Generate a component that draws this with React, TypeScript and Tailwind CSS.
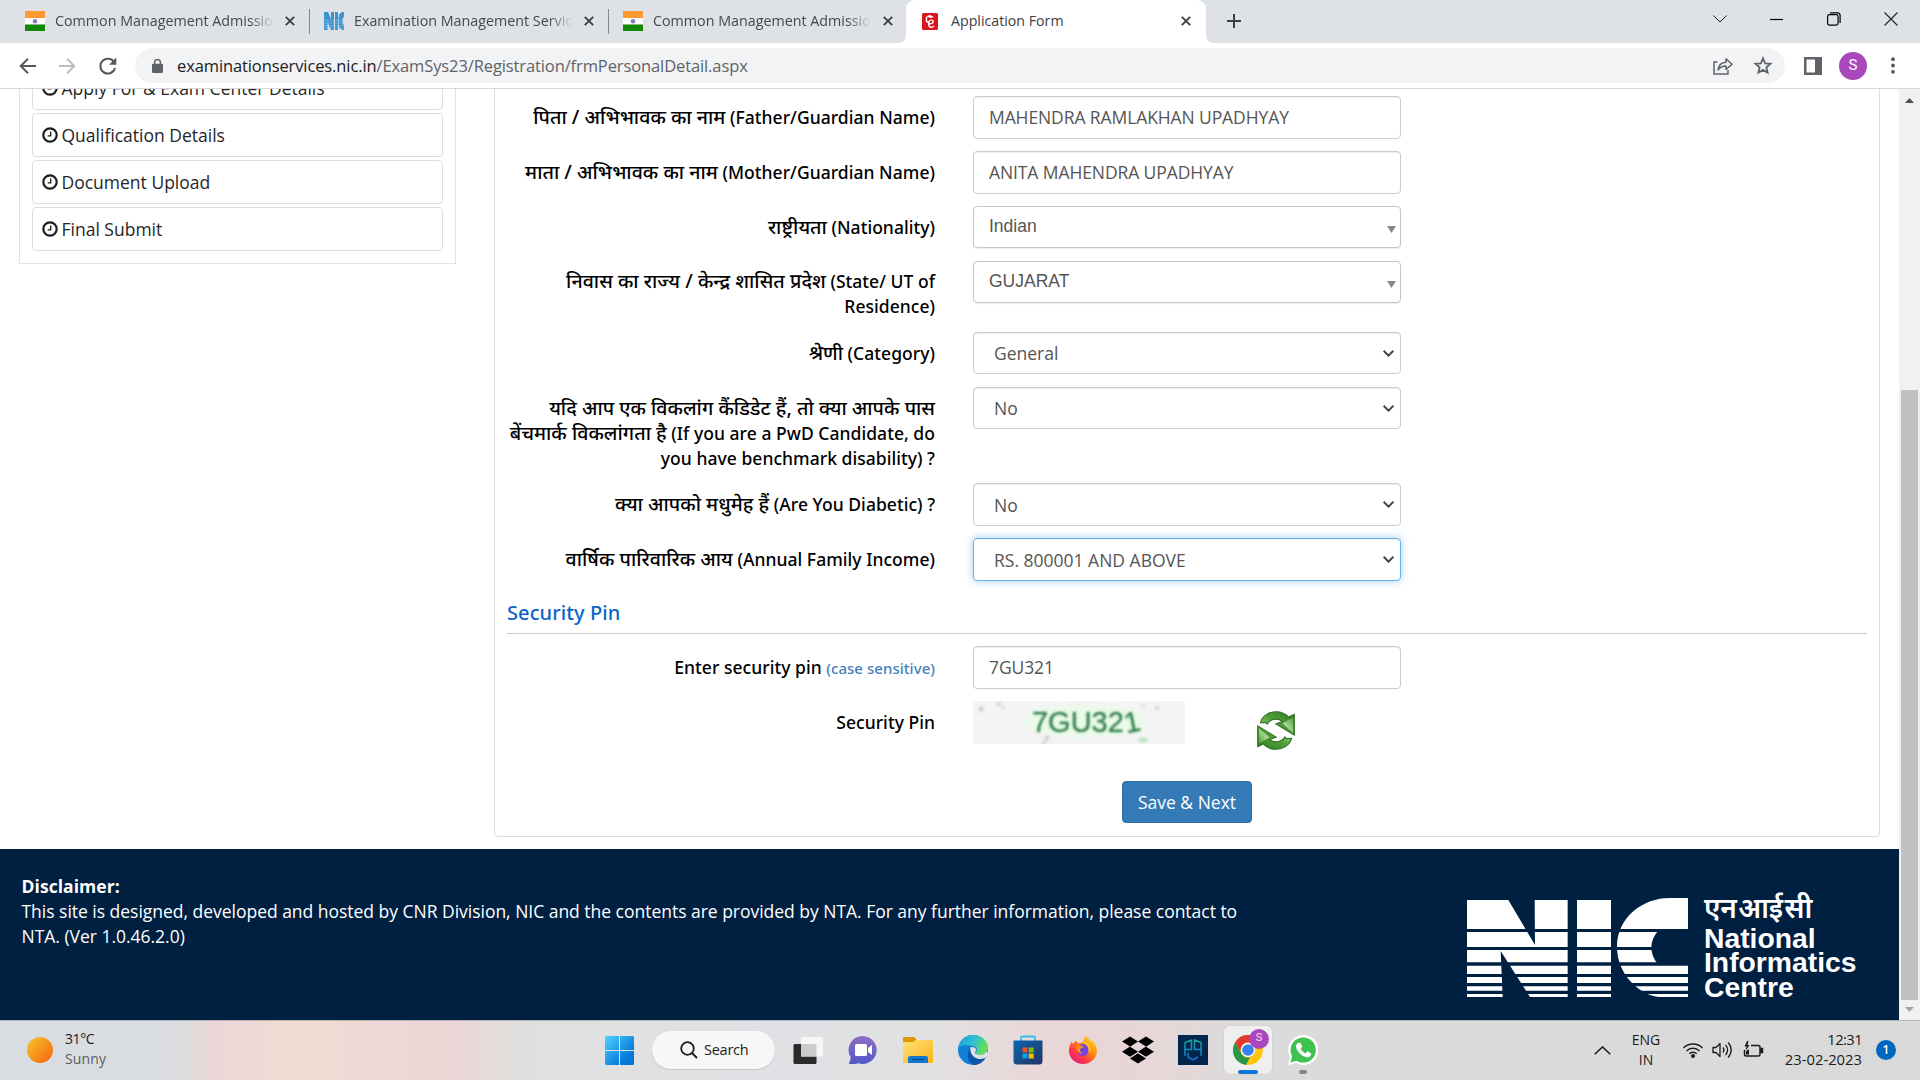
import type { ReactNode } from "react";
import { FaDropbox } from "react-icons/fa6";

const flagIcon = (
  <svg width="20" height="20" viewBox="0 0 20 20" className="shrink-0">
    <rect width="20" height="7" fill="#ff9933" />
    <rect y="7" width="20" height="6.5" fill="#fff" />
    <rect y="13.5" width="20" height="6.5" fill="#128807" />
    <circle cx="10" cy="10.2" r="2.2" fill="#7d7cc4" />
  </svg>
);

const nicIcon = (
  <svg width="20" height="20" viewBox="0 0 20 20" className="shrink-0" fill="#3b94cf">
    <path d="M0 1h4l3 7V1h3v18H7L3.500 11v8H0zM11 1h3v18h-3zM20 1c-4 0-5.500 2-5.500 9s1.500 9 5.500 9v-5c-2 0-2-8 0-8z" />
    <path d="M0 9.300h20M0 12h20M0 14.600h20M0 17h20" stroke="#a9cfe9" strokeWidth=".5" />
  </svg>
);

function Close() {
  return (
    <svg width="10" height="10" viewBox="0 0 10 10" stroke="#3c4043" strokeWidth="1.9" className="shrink-0">
      <path d="M.8.8l8.400 8.400M9.200.8L.8 9.200" />
    </svg>
  );
}

function Tab({ icon, title, className, divider = true }: { icon: ReactNode; title: string; className: string; divider?: boolean }) {
  return (
    <div className={"flex h-[42px] items-center " + className}>
      {icon}
      <span className="ml-[10px] w-[221px] overflow-hidden whitespace-nowrap text-[14.3px] text-[#45494d] [mask-image:linear-gradient(to_right,black_88%,transparent_99%)]">
        {title}
      </span>
      <span className="ml-[9px] flex">
        <Close />
      </span>
      {divider && <span className="ml-auto h-[25px] w-px bg-[#85888c]" />}
    </div>
  );
}

function BrowserChrome() {
  return (
    <header className="shrink-0">
      <div className="flex h-[43px] bg-[#dee1e6]">
        <Tab icon={flagIcon} title="Common Management Admission" className="w-[310px] pl-[25px]" />
        <Tab icon={nicIcon} title="Examination Management Services" className="w-[299px] pl-[14px]" />
        <Tab icon={flagIcon} title="Common Management Admission" className="w-[297px] pl-[14px]" divider={false} />
        <div className="relative flex h-[43px] w-[300px] items-center rounded-t-[9px] bg-white pb-px pl-4">
          <svg width="8" height="8" viewBox="0 0 8 8" className="absolute bottom-0 -left-2" fill="#fff">
            <path d="M8 0v8H0c5 0 8-3 8-8z" />
          </svg>
          <svg width="8" height="8" viewBox="0 0 8 8" className="absolute -right-2 bottom-0" fill="#fff">
            <path d="M0 0v8h8C3 8 0 5 0 0z" />
          </svg>
          <svg width="16" height="17" viewBox="0 0 16 17">
            <rect width="16" height="17" rx="1.5" fill="#d8141c" />
            <path d="M4 3.200l4-1.200 4 2-3.500 1z" fill="#fff" />
            <path d="M4.500 4v4.500l2 .8M6.300 10.500c3 .6 5-.3 5-2 0-1.800-3.600-2-4.300.3-.8 2.500-.3 5.700 2.200 5.500 1.300 0 2.200-.6 2.800-1.500" fill="none" stroke="#fff" strokeWidth="1.400" />
          </svg>
          <span className="ml-[13px] text-[14.2px] text-[#3c4043]">Application Form</span>
          <span className="mr-[15px] ml-auto flex">
            <Close />
          </span>
        </div>
        <svg width="14" height="14" viewBox="0 0 14 14" className="mt-[14px] ml-[21px]" stroke="#3c4043" strokeWidth="2">
          <path d="M7 0v14M0 7h14" />
        </svg>
        <div className="mr-[22px] ml-auto flex items-center gap-[43px] pb-[6px]">
          <svg width="14" height="8" viewBox="0 0 14 8" fill="none" stroke="#222">
            <path d="M.5.5L7 7 13.500.5" />
          </svg>
          <svg width="14" height="14" viewBox="0 0 14 14" stroke="#000" strokeWidth="1.200">
            <path d="M0 7.500h13" />
          </svg>
          <svg width="14" height="14" viewBox="0 0 14 14" fill="none" stroke="#000" strokeWidth="1.200">
            <rect x=".6" y="2.600" width="10.500" height="10.500" rx="1.800" />
            <path d="M3 .8h7.500a2.600 2.600 0 0 1 2.600 2.600V11" />
          </svg>
          <svg width="14" height="14" viewBox="0 0 14 14" stroke="#222" strokeWidth="1.100">
            <path d="M.5.5l13 13M13.500.5l-13 13" />
          </svg>
        </div>
      </div>
      <div className="flex h-[46px] items-center border-b border-[#d6d8da] bg-white pl-[19px]">
        <svg width="17" height="16" viewBox="0 0 17 16" fill="none" stroke="#55595e" strokeWidth="2">
          <path d="M17 8H2M9 .8L1.700 8 9 15.200" />
        </svg>
        <svg width="17" height="16" viewBox="0 0 17 16" className="ml-[23px]" fill="none" stroke="#bdbfc2" strokeWidth="2">
          <path d="M0 8h15M8 .8L15.300 8 8 15.200" />
        </svg>
        <svg width="18" height="18" viewBox="0 0 18 18" className="ml-[23px]">
          <path d="M15.300 5.500A7.400 7.400 0 1 0 16 11" fill="none" stroke="#55595e" strokeWidth="2.100" />
          <path d="M17.300.6v7.200h-7.200z" fill="#55595e" />
        </svg>
        <div className="ml-[18px] flex h-[35px] w-[1650px] items-center rounded-full bg-[#f1f3f4] pl-[17px]">
          <svg width="11" height="14" viewBox="0 0 11 14">
            <rect y="4.800" width="11" height="9.200" rx="1.200" fill="#5f6368" />
            <path d="M2.600 5V3.400a2.900 2.900 0 0 1 5.800 0V5" fill="none" stroke="#5f6368" strokeWidth="1.500" />
          </svg>
          <span className="ml-[14px] pt-px text-[16.5px] tracking-[-0.11px] text-[#5f6368]">
            <span className="text-[#202124]">examinationservices.nic.in</span>/ExamSys23/Registration/frmPersonalDetail.aspx
          </span>
          <svg width="20" height="18" viewBox="0 0 20 18" className="ml-auto" fill="none" stroke="#5f6368" strokeWidth="1.500">
            <path d="M4.500 5H1v12h14v-4" />
            <path d="M5 13c.5-5 3.500-7.500 8-7.700V1.800L19 7.200l-6 5.300V9.100C9.500 9 7 10.300 5 13z" strokeLinejoin="round" />
          </svg>
          <svg width="20" height="19" viewBox="0 0 20 19" className="mr-[12px] ml-[20px]" fill="none" stroke="#5f6368" strokeWidth="1.800">
            <path d="M10 2.300l2.100 5 5.400.5-4.100 3.600 1.200 5.300L10 13.900l-4.600 2.800 1.200-5.300L2.500 7.800l5.400-.5z" />
          </svg>
        </div>
        <svg width="18" height="18" viewBox="0 0 18 18" className="ml-[19px]">
          <rect width="18" height="18" fill="#5f6368" />
          <rect x="2.500" y="2.500" width="8.500" height="13" fill="#fff" />
        </svg>
        <span className="ml-[17px] flex size-7 items-center justify-center rounded-full bg-[#ab47bc] font-['Roboto'] text-[15px] text-white">S</span>
        <svg width="4" height="17" viewBox="0 0 4 17" className="ml-[24px]" fill="#55595e">
          <circle cx="2" cy="2.200" r="1.900" />
          <circle cx="2" cy="8.500" r="1.900" />
          <circle cx="2" cy="14.800" r="1.900" />
        </svg>
      </div>
    </header>
  );
}

const steps = ["Apply For & Exam Center Details", "Qualification Details", "Document Upload", "Final Submit"];

function Sidebar() {
  return (
    <aside className="ml-[19px] h-[175px] w-[437px] shrink-0 overflow-hidden border border-t-0 border-[#e3e3e3]">
      <ul className="-mt-[23px] ml-3 w-[411px] space-y-[3px]">
        {steps.map((s) => (
          <li key={s} className="flex h-11 items-center rounded-[4px] border border-[#dedede] pl-[9px] text-[17.5px] text-[#262626]">
            <svg width="16" height="16" viewBox="0 0 16 16" fill="none" stroke="#1d1d1d">
              <circle cx="8" cy="8" r="6.700" strokeWidth="2.200" />
              <path d="M8.700 4.500v4.300H5.700" strokeWidth="1.300" />
            </svg>
            <span className="ml-[3.5px]">{s}</span>
          </li>
        ))}
      </ul>
    </aside>
  );
}

function Hi({ children }: { children: ReactNode }) {
  return <span className="text-[19.6px] leading-none">{children}</span>;
}

function Row({ label, height, children }: { label: ReactNode; height: string; children: ReactNode }) {
  return (
    <div className={"flex items-start " + height}>
      <div className="-ml-1 w-[432px] shrink-0 pt-[9px] text-right font-['Noto_Sans'] text-[17.5px] leading-[25px] font-medium tracking-[0.04px] text-black">{label}</div>
      <div className="ml-[38px] w-[428px]">{children}</div>
    </div>
  );
}

function TextField({ value }: { value: string }) {
  return (
    <div className="flex h-[43px] items-center rounded-[4px] border border-[#ccc] pl-[15px] text-[17.5px] tracking-[-0.1px] text-[#555] shadow-[inset_0_1px_1px_rgba(0,0,0,0.075)]">
      {value}
    </div>
  );
}

function Combo({ value }: { value: string }) {
  return (
    <div className="flex h-[42px] items-center justify-between rounded-[4px] border border-[#c6c6c6] pr-1 pl-[15px] font-['Liberation_Sans'] text-[17.5px] text-[#555] shadow-[0_1px_1px_rgba(0,0,0,0.08)]">
      <span className="pb-px">{value}</span>
      <svg width="9" height="7" viewBox="0 0 9 7" className="mt-1" fill="#888">
        <path d="M0 0h9L4.500 7z" />
      </svg>
    </div>
  );
}

function Select({ value, tall = false, focused = false }: { value: string; tall?: boolean; focused?: boolean }) {
  return (
    <div
      className={
        "flex items-center justify-between rounded-[4px] border pr-[6px] pl-[20px] text-[17.5px] text-[#555] " +
        (tall ? "h-[43px] " : "h-[42px] ") +
        (focused
          ? "border-[#66afe9] shadow-[inset_0_1px_1px_rgba(0,0,0,0.075),0_0_8px_rgba(102,175,233,0.6)]"
          : "border-[#ccc] shadow-[inset_0_1px_1px_rgba(0,0,0,0.075)]")
      }
    >
      <span className={tall ? "pt-[2px]" : ""}>{value}</span>
      <svg width="11" height="7" viewBox="0 0 11 7" fill="none" stroke="#444" strokeWidth="2">
        <path d="M.6.8l4.900 4.800L10.400.8" />
      </svg>
    </div>
  );
}

const upperArrow = "M9 34C14 13 35 1 56 1c15 0 28 6 37 16l17-8v62L55 37l19-7C61 19 39 22 29 38l-4-5z";

function RefreshIcon() {
  return (
    <svg width="38" height="39" viewBox="-1 -1 113 116">
      <defs>
        <linearGradient id="leaf" x1="0" x2="1" y1="1" y2="0">
          <stop offset="0" stopColor="#c4e3a8" />
          <stop offset=".5" stopColor="#4f9f38" />
          <stop offset="1" stopColor="#2f7a22" />
        </linearGradient>
        <linearGradient id="leafLight" x1="0" x2="1" y1="1" y2="0">
          <stop offset=".2" stopColor="#cfe9ba" />
          <stop offset="1" stopColor="#4f9f38" />
        </linearGradient>
      </defs>
      <path d={upperArrow} fill="url(#leaf)" stroke="#2d6e20" strokeWidth="3" />
      <path d="M75 36l31-18v45z" fill="url(#leafLight)" />
      <g transform="rotate(180 55.500 57)">
        <path d={upperArrow} fill="url(#leaf)" stroke="#2d6e20" strokeWidth="3" />
        <path d="M75 36l31-18v45z" fill="url(#leafLight)" />
      </g>
    </svg>
  );
}

function Captcha() {
  return (
    <div className="relative flex h-[43px] w-[212px] justify-center overflow-hidden bg-[#f4f4f4] pl-[14px]">
      <svg width="212" height="43" className="absolute inset-0">
        <g className="blur-[1.5px]" fill="#ccc">
          <ellipse cx="112" cy="20" rx="62" ry="17" fill="#ecf9ec" />
          <circle cx="8" cy="8" r="2.500" fill="#c8c8c8" />
          <circle cx="26" cy="3" r="2" />
          <circle cx="30" cy="7" r="1.500" />
          <circle cx="74" cy="37" r="2.500" />
          <circle cx="71" cy="42" r="2" />
          <circle cx="184" cy="7" r="2" />
          <circle cx="170" cy="5" r="1.500" />
          <ellipse cx="170" cy="39" rx="5" ry="2" fill="#b7dcb9" />
        </g>
      </svg>
      <span className="relative flex font-['Liberation_Sans'] text-[29px] leading-[42px] text-[#2f7548] blur-[0.8px] [text-shadow:0_0_3px_#a5eda9]">
        7GU32<span className="inline-block -rotate-12">1</span>
      </span>
    </div>
  );
}

function FormPanel() {
  return (
    <section className="ml-[38px] h-[748px] w-[1386px] shrink-0 rounded-b-[4px] border border-t-0 border-[#ddd] pt-[7px] pr-3 pl-3">
      <Row height="h-[55px]" label={<><Hi>पिता / अभिभावक का नाम</Hi> (Father/Guardian Name)</>}>
        <TextField value="MAHENDRA RAMLAKHAN UPADHYAY" />
      </Row>
      <Row height="h-[55px]" label={<><Hi>माता / अभिभावक का नाम</Hi> (Mother/Guardian Name)</>}>
        <TextField value="ANITA MAHENDRA UPADHYAY" />
      </Row>
      <Row height="h-[55px]" label={<><Hi>राष्ट्रीयता</Hi> (Nationality)</>}>
        <Combo value="Indian" />
      </Row>
      <Row height="h-[71px]" label={<div className="-mt-px"><Hi>निवास का राज्य / केन्द्र शासित प्रदेश</Hi> (State/ UT of<br />Residence)</div>}>
        <Combo value="GUJARAT" />
      </Row>
      <Row height="h-[55px]" label={<><Hi>श्रेणी</Hi> (Category)</>}>
        <Select value="General" />
      </Row>
      <Row
        height="h-[96px]"
        label={<><Hi>यदि आप एक विकलांग कैंडिडेट हैं, तो क्या आपके पास</Hi><br /><Hi>बेंचमार्क विकलांगता है</Hi> (If you are a PwD Candidate, do<br />you have benchmark disability) ?</>}
      >
        <Select value="No" />
      </Row>
      <Row height="h-[55px]" label={<><Hi>क्या आपको मधुमेह हैं</Hi> (Are You Diabetic) ?</>}>
        <Select value="No" tall />
      </Row>
      <Row height="h-[55px]" label={<><Hi>वार्षिक पारिवारिक आय</Hi> (Annual Family Income)</>}>
        <Select value="RS. 800001 AND ABOVE" tall focused />
      </Row>
      <h2 className="mb-3 h-[41px] border-b border-[#ccc] pt-[5px] font-['Noto_Sans'] text-[20px] leading-[29px] font-medium tracking-[0.1px] text-[#0c64c8]">Security Pin</h2>
      <Row height="h-[55px]" label={<>Enter security pin <span className="text-[15px] leading-none text-[#4580bd]">(case sensitive)</span></>}>
        <TextField value="7GU321" />
      </Row>
      <Row height="h-[80px]" label="Security Pin">
        <div className="flex items-start">
          <Captcha />
          <span className="mt-[10px] ml-[72px]">
            <RefreshIcon />
          </span>
        </div>
      </Row>
      <button className="ml-[615px] flex h-[42px] w-[130px] items-center justify-center rounded-[4px] border border-[#2e6da4] bg-[#337ab7] text-[17.5px] text-white">
        Save &amp; Next
      </button>
    </section>
  );
}

const bands: [number, number][] = [[0, 93], [102, 45], [156, 37], [203, 25], [237, 18], [265, 13], [288, 9]];

function NicLogo() {
  return (
    <svg width="221" height="99" viewBox="0 0 663 297" fill="#fff">
      <clipPath id="bands">
        {bands.map(([y, h]) => (
          <rect key={y} y={y} width="663" height={h} />
        ))}
      </clipPath>
      <g clipPath="url(#bands)">
        <path d="M0 6h124l80 135-1-135h99v291H189L101 159l6 138H0z" />
        <path d="M330 6h102v291H330z" />
        <path d="M663 0h-56C530 0 451 55 450 146c1 85 65 141 124 151h89v-97h-89c-28-31-28-73 1-103h88z" />
      </g>
    </svg>
  );
}

function Footer() {
  return (
    <footer className="flex h-[171px] shrink-0 bg-[#002042] text-white">
      <div className="w-[1467px] pt-[25px] pl-[21.5px] text-[17.5px] leading-[25.2px] tracking-[-0.02px]">
        <b className="tracking-[0.05px]">Disclaimer:</b>
        <p>
          This site is designed, developed and hosted by CNR Division, NIC and the contents are provided by NTA. For any further information, please contact to
          <br />
          NTA. (Ver 1.0.46.2.0)
        </p>
      </div>
      <div className="pt-[49px]">
        <NicLogo />
      </div>
      <div className="pt-[39px] pl-4 font-['Liberation_Sans'] text-[28.3px] leading-[24.4px] font-bold">
        <p className="h-[38px] pt-1 font-['Noto_Sans'] text-[28px] leading-[30px] font-semibold tracking-[-0.2px] whitespace-nowrap [word-spacing:-5.5px]">एन आई सी</p>
        <p>National</p>
        <p>Informatics</p>
        <p>Centre</p>
      </div>
    </footer>
  );
}

function Scrollbar() {
  return (
    <div className="flex w-[21px] shrink-0 flex-col items-center bg-[#f1f1f1]">
      <svg width="9" height="5" viewBox="0 0 9 5" className="mt-[9px]" fill="#505050">
        <path d="M0 5l4.500-5L9 5z" />
      </svg>
      <div className="mt-[287px] h-[610px] w-[17px] bg-[#c1c1c1]" />
      <svg width="9" height="5" viewBox="0 0 9 5" className="mt-[7px]" fill="#a3a3a3">
        <path d="M0 0l4.500 5L9 0z" />
      </svg>
    </div>
  );
}

function AppSlot({ children }: { children: ReactNode }) {
  return <div className="relative flex h-[59px] w-[55px] shrink-0 items-center justify-center">{children}</div>;
}

function Taskbar() {
  return (
    <div className="flex h-[60px] shrink-0 items-center border-t border-[#b5b5b9] bg-[linear-gradient(90deg,#d9dce1_0px,#dadcdf_180px,#ebd7d6_215px,#f2dcd5_300px,#ecd5d5_450px,#e0e0e0_530px,#dfe1e4_780px,#e2e1e2_940px,#ead7d7_1040px,#e8d6d7_1130px,#dbdbdb_1260px,#dcdbdc_1450px,#d9d9d9_1920px)] pb-px">
      <div className="flex w-[592px] items-center pl-[27px] text-[14px] leading-[20px]">
        <span className="size-[26px] rounded-full bg-linear-to-br from-[#f5c52c] to-[#f2600a]" />
        <div className="mb-[2px] ml-3">
          <p className="tracking-[-0.4px] text-[#1b1b1b]">31°C</p>
          <p className="tracking-[0.15px] text-[#5c5c5c]">Sunny</p>
        </div>
      </div>
      <svg width="29" height="29" viewBox="0 0 29 29" className="ml-[13px]">
        <defs>
          <linearGradient id="win" x2="1" y2="1">
            <stop stopColor="#4fd4ff" />
            <stop offset=".7" stopColor="#0a7ddb" />
            <stop offset="1" stopColor="#0071d0" />
          </linearGradient>
        </defs>
        <path d="M1 0h13v14H0V1zM15 0h13l1 1v13H15zM0 15h14v14H1l-1-1zM15 15h14v13l-1 1H15z" fill="url(#win)" />
      </svg>
      <div className="ml-[18px] flex h-[38px] w-[123px] items-center rounded-full bg-[#f7f7f8] pl-[28px] shadow-[0_1px_1px_rgba(0,0,0,0.12)]">
        <svg width="18" height="18" viewBox="0 0 18 18" fill="none" stroke="#1b1b1b" strokeWidth="1.800">
          <circle cx="7.500" cy="7.500" r="6.300" />
          <path d="M12 12l5 5" />
        </svg>
        <span className="ml-[6px] text-[14.5px] tracking-[-0.25px] text-[#1b1b1b]">Search</span>
      </div>
      <span className="w-[5px]" />
      <AppSlot>
        <svg width="30" height="30" viewBox="0 0 30 30">
          <rect x=".5" y="9" width="23" height="20" rx="1.500" fill="#2b2b2b" />
          <rect x="8" y="2" width="22" height="19.500" rx="1" fill="#f6f6f6" />
          <rect x="8" y="9" width="15.500" height="12.500" fill="#cbcbcb" />
        </svg>
      </AppSlot>
      <AppSlot>
        <svg width="30" height="30" viewBox="0 0 30 30">
          <defs>
            <linearGradient id="chat" x2="0" y2="1">
              <stop stopColor="#8f6ec4" />
              <stop offset="1" stopColor="#5059c9" />
            </linearGradient>
          </defs>
          <path d="M15 1a14 14 0 1 1-5 27.200c-3 1-6 .8-9 .8l1.800-6.500A14 14 0 0 1 15 1z" fill="url(#chat)" />
          <rect x="7" y="9" width="12" height="12" rx="1.500" fill="#fff" />
          <path d="M20 13l4-3v10l-4-3z" fill="#fff" />
        </svg>
      </AppSlot>
      <AppSlot>
        <svg width="30" height="28" viewBox="0 0 30 28">
          <defs>
            <linearGradient id="folder" x2="1" y2="1">
              <stop stopColor="#ffe07a" />
              <stop offset="1" stopColor="#fbb517" />
            </linearGradient>
          </defs>
          <path d="M0 2a1 1 0 0 1 1-1h10l3 3h15l1 1v5H0z" fill="#dd9a00" />
          <path d="M0 6h10l3-2h17v22a1 1 0 0 1-1 1H1a1 1 0 0 1-1-1z" fill="url(#folder)" />
          <path d="M5 27v-5a2 2 0 0 1 2-2h16a2 2 0 0 1 2 2v5z" fill="#1279cc" />
          <path d="M9 23.500h12" stroke="#0b4f91" strokeWidth="1.300" />
        </svg>
      </AppSlot>
      <AppSlot>
        <svg width="30" height="30" viewBox="0 0 30 30">
          <defs>
            <linearGradient id="edgeA" x2="1" y2=".3">
              <stop stopColor="#1aa0dd" />
              <stop offset=".6" stopColor="#31c3cf" />
              <stop offset="1" stopColor="#65dd52" />
            </linearGradient>
          </defs>
          <circle cx="15" cy="15" r="15" fill="#1181d6" />
          <path d="M17 30c6-.5 10-4 12-8.500l3 2V10l-6 9-7 1-3-5z" fill="#dfe1e5" opacity="0" />
          <path d="M.3 12.500C1.500 5 7.500 0 15 0c9 0 15 6 15 12.500 0 5-4 7.500-8 7.500-3 0-5-1.200-4-2.600 1.600-1.700 1.200-5.400-2.600-6.400C10 9.600 4 9 .3 12.500z" fill="url(#edgeA)" />
          <path d="M12 13c1.500-1.800 5.500-1 6 1.500 0 1.500-.7 2-1 3 0 2 3.500 3 7 2.200 2-.4 4-1.700 5.200-3.600l.8 2.900-2.500 4.500C20 26 12 22 12 13z" fill="#dfe1e5" />
          <path d="M12.500 12.500c-1.500 5 3 11 8 11.500 2.500.2 5-.4 7-1.500-2.500 5-7 7.500-12 7.500-6-3-8-12-3-17.500z" fill="#0f56a8" />
        </svg>
      </AppSlot>
      <AppSlot>
        <svg width="30" height="30" viewBox="0 0 30 30">
          <defs>
            <linearGradient id="store" x2="1" y2="1">
              <stop stopColor="#0c66b4" />
              <stop offset="1" stopColor="#20355e" />
            </linearGradient>
          </defs>
          <path d="M8 6V3a1.500 1.500 0 0 1 1.500-1.500h11A1.500 1.500 0 0 1 22 3v3" fill="none" stroke="#31c0f2" strokeWidth="1.800" />
          <path d="M.5 5.500h29V26a3.500 3.500 0 0 1-3.500 3.500H4A3.500 3.500 0 0 1 .5 26z" fill="url(#store)" />
          <path d="M9.500 12.500h5v5h-5z" fill="#f15022" />
          <path d="M15.700 12.500h5v5h-5z" fill="#80bb02" />
          <path d="M9.500 18.500h5v5h-5z" fill="#00a3ee" />
          <path d="M15.700 18.500h5v5h-5z" fill="#ffb902" />
        </svg>
      </AppSlot>
      <AppSlot>
        <svg width="30" height="30" viewBox="0 0 30 30">
          <defs>
            <linearGradient id="fox" x1="1" x2=".2" y1="0" y2="1">
              <stop stopColor="#fff04a" />
              <stop offset=".4" stopColor="#ff980e" />
              <stop offset=".75" stopColor="#ff3647" />
              <stop offset="1" stopColor="#e31587" />
            </linearGradient>
          </defs>
          <path d="M18.500.5c1 3 3.500 4 5 6l1.500-1c3 3.500 4 7 4 10.500C29 23.500 22.500 29 15 29S1 23.500 1 15.500c0-3 1-6.500 3-9l.5 2.500L8 5.500l2 2.500c2 0 3.500-.5 5-1 .5-3 1.500-5 3.500-6.500z" fill="url(#fox)" />
          <circle cx="14.800" cy="15" r="6" fill="#7542e5" />
          <path d="M8 11c3-2 6 0 8 .5-1 1.500-3 1.500-4 2.500-.5 2 1 3.500 3 4-3 1.500-7-1-7-7z" fill="#ff8a16" />
          <path d="M16 7c4 2 6 6 5.500 10" fill="none" stroke="#ffbd2e" strokeWidth="2" />
        </svg>
      </AppSlot>
      <AppSlot>
        <FaDropbox size={32} color="#000" />
      </AppSlot>
      <AppSlot>
        <svg width="30" height="30" viewBox="0 0 30 30">
          <defs>
            <linearGradient id="pg" x2="0" y2="1">
              <stop stopColor="#12a59a" />
              <stop offset="1" stopColor="#1376dc" />
            </linearGradient>
          </defs>
          <rect width="30" height="30" fill="#02254b" />
          <path d="M7 21V7.500L13.500 5v9.500H7M16.500 5L23 7.500v7h-6.500zM23 14v7M7 21v-2M10 18v4l5 3 5-3" fill="none" stroke="url(#pg)" strokeWidth="1.500" />
        </svg>
      </AppSlot>
      <AppSlot>
        <div className="absolute top-[5px] left-[4px] h-[48px] w-[48px] rounded-[5px] bg-[#f0eff0] shadow-[0_0_1px_rgba(0,0,0,0.3)]" />
        <svg width="30" height="30" viewBox="0 0 30 30" className="relative">
          <circle cx="15" cy="15" r="15" fill="#fdc60a" />
          <path d="M2 7.500A15 15 0 0 1 28 7.500H15a7.500 7.500 0 0 0-6.500 11.200z" fill="#e03b30" />
          <path d="M2 7.500L8.500 18.700A7.500 7.500 0 0 0 17 22.200L13 30A15 15 0 0 1 2 7.500z" fill="#269947" />
          <circle cx="15" cy="15" r="7.200" fill="#fff" />
          <circle cx="15" cy="15" r="5.800" fill="#3680ef" />
        </svg>
        <span className="absolute top-[8px] left-[29px] flex size-5 items-center justify-center rounded-full bg-[#ab47bc] font-['Roboto'] text-[11px] text-white/80">S</span>
        <span className="absolute bottom-[6px] left-[18px] h-1 w-5 rounded-full bg-[#0d78d6]" />
      </AppSlot>
      <AppSlot>
        <svg width="30" height="30" viewBox="0 0 30 30">
          <path d="M15 0a15 15 0 1 1-7 28l-8 2 2-8A15 15 0 0 1 15 0z" fill="#fff" />
          <circle cx="15.200" cy="15" r="12.600" fill="#3ec250" />
          <path d="M2.500 27.500l1.800-7 5 5z" fill="#3ec250" />
          <path d="M10.500 7.800l2-.1 1.700 4-1.600 2.100c1.200 2.300 2.600 3.600 4.800 4.600l2-2.100 3.800 1.900c.2 2.500-1.800 4.200-4.200 4.200C13.500 21.500 8.500 16 8 11.500c0-1.700 1-3.100 2.500-3.700z" fill="#fff" />
        </svg>
        <span className="absolute bottom-[6px] left-6 h-1 w-2 rounded-full bg-[#868686]" />
      </AppSlot>
      <div className="ml-auto flex items-center text-[#1b1b1b]">
        <svg width="17" height="9" viewBox="0 0 17 9" fill="none" stroke="#1b1b1b" strokeWidth="1.500">
          <path d="M.7 8.300L8.500.9l7.800 7.400" />
        </svg>
        <div className="ml-[20px] w-[30px] text-center text-[14px] leading-[20px]">
          <p>ENG</p>
          <p>IN</p>
        </div>
        <svg width="20" height="16" viewBox="0 0 20 16" className="ml-[22px]" fill="none" stroke="#1b1b1b" strokeWidth="1.400">
          <path d="M.5 6a13.400 13.400 0 0 1 19 0M3.500 9a9.200 9.200 0 0 1 13 0M6.300 11.800a5.200 5.200 0 0 1 7.400 0" />
          <circle cx="10" cy="14" r="1.300" fill="#1b1b1b" />
        </svg>
        <svg width="21" height="18" viewBox="0 0 21 18" className="ml-[9px]" fill="none" stroke="#1b1b1b" strokeWidth="1.300">
          <path d="M1 6.500h3l4-4v13l-4-4H1zM11 6.500a4 4 0 0 1 0 5M13.500 4a7 7 0 0 1 0 10M16 1.500a10.500 10.500 0 0 1 0 15" strokeLinejoin="round" />
        </svg>
        <svg width="21" height="18" viewBox="0 0 21 18" className="ml-[10px]" fill="none" stroke="#1b1b1b" strokeWidth="1.500">
          <path d="M8 4.500h7.500A1.500 1.500 0 0 1 17 6v7.500a1.500 1.500 0 0 1-1.500 1.500H3a1.500 1.500 0 0 1-1.500-1.500V9" />
          <path d="M18 7.500h1.500v4H18z" fill="#1b1b1b" />
          <path d="M4 0L1.500 5.500h2L2.500 10l4-6h-2L5.500 0zM3 13.500v-3L6 8v5.500z" fill="#1b1b1b" stroke="none" />
        </svg>
        <div className="mb-[2px] ml-[18px] w-[80px] text-right text-[14.8px] leading-[20px] whitespace-nowrap">
          <p className="tracking-[-0.6px]">12:31</p>
          <p>23-02-2023</p>
        </div>
        <span className="mr-6 ml-[14px] flex size-5 items-center justify-center rounded-full bg-[#0067c0] text-[12px] font-semibold text-white">1</span>
      </div>
    </div>
  );
}

export default function App() {
  return (
    <div className="flex h-[1080px] w-[1920px] flex-col overflow-hidden bg-white font-['Open_Sans','Noto_Sans',sans-serif]">
      <BrowserChrome />
      <div className="flex h-[931px] shrink-0">
        <main className="flex w-[1899px] shrink-0 flex-col overflow-hidden">
          <div className="flex h-[760px] shrink-0 items-start">
            <Sidebar />
            <FormPanel />
          </div>
          <Footer />
        </main>
        <Scrollbar />
      </div>
      <Taskbar />
    </div>
  );
}
